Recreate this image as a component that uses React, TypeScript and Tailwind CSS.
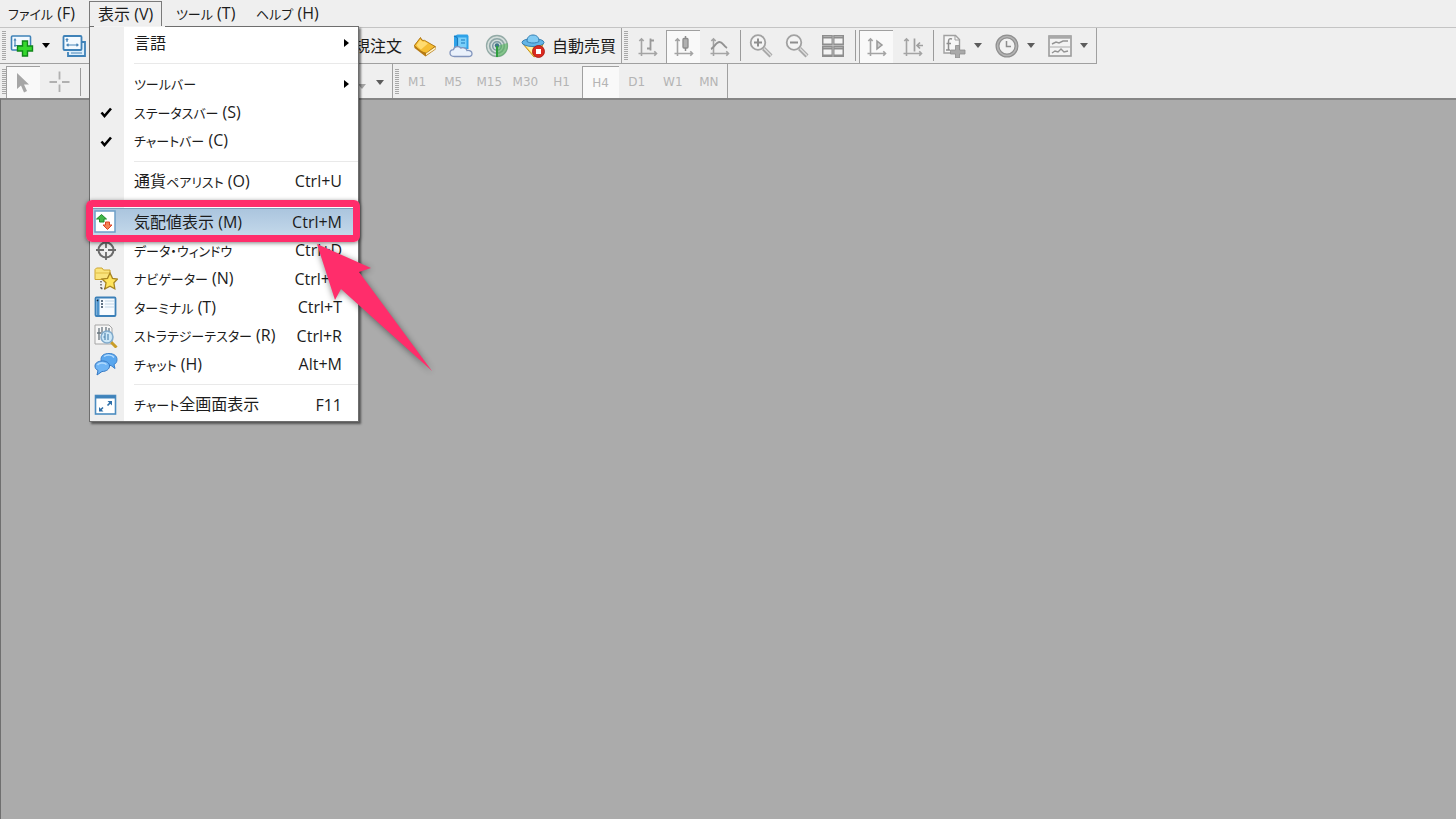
/**
 * Trading terminal window
 *
 * Menu bar with the "view" menu open, two toolbar rows and an empty workspace.
 * The market watch entry is highlighted with a callout frame and an arrow.
 */

import type { ReactNode } from "react";

const KANA = /([\u30a0-\u30ff]+)/;

// Katakana is set a little smaller than kanji and latin, as in the UI font
function Label({ text }: { text: string }) {
  return (
    <span className="whitespace-nowrap">
      {text.split(KANA).map((part, i) =>
        KANA.test(part) ? (
          <span key={i} className="text-[13px] [font-feature-settings:'palt']">
            {part}
          </span>
        ) : (
          part
        )
      )}
    </span>
  );
}

function Svg({ children }: { children: ReactNode }) {
  return (
    <svg viewBox="0 0 24 24" className="size-6 shrink-0" fill="none" aria-hidden="true">
      {children}
    </svg>
  );
}

/* ---------- Toolbar icons ---------- */

const NewChartIcon = () => (
  <Svg>
    <rect x="1.5" y="2" width="19" height="14" rx="1" fill="#f2f9ff" stroke="#3f82b8" strokeWidth="1.6" />
    <path d="M5 5v8M4 6.5l1-1.5 1 1.5M4 11.5h8" stroke="#4a86b8" strokeWidth="1.2" />
    <path d="M12.5 7h5v5h5v5h-5v5h-5v-5h-5v-5h5z" fill="#35d82c" stroke="#11861a" strokeWidth="1.4" />
  </Svg>
);

const ProfilesIcon = () => (
  <Svg>
    <path d="M19 8h4v14H6v-4" fill="#dceefb" stroke="#3f82b8" strokeWidth="1.8" />
    <rect x="1.5" y="2" width="18" height="14" rx="1" fill="#f4faff" stroke="#3f82b8" strokeWidth="1.8" />
    <path d="M5 5v3M3.8 6 5 4.800l1.200 1.200M5 11h11M6.500 9.800 5 11l1.500 1.200M14.500 9.800 16 11l-1.500 1.200M9 19h11" stroke="#4a86b8" strokeWidth="1.2" />
  </Svg>
);

const BookIcon = () => (
  <Svg>
    <path d="M1 11.500 7.500 3.500 9.500 6 23 12.500 22.500 15.500 12.500 22.500 1.500 14z" fill="#b87b14" />
    <path d="M1.500 11.500 7.500 3.500c.5 2.500 2 3.300 4 2.800l10.500 6.200-8.500 6.500c-3 .5-9-4-12-7.500z" fill="#f5bd33" stroke="#a8700f" strokeWidth=".8" />
    <path d="M3.500 11 7.500 5.500c1 2 2.500 2.500 4 2l3.500 2-7 6c-1.500-1-3.500-3-4.500-4.500z" fill="#ffdb70" />
    <path d="m13 19.500 9.300-6.500v2L13 21.300z" fill="#fff3c8" />
  </Svg>
);

const CloudServerIcon = () => (
  <Svg>
    <path d="M5 2 8.500 0.500h10l1 1.500v13H5z" fill="#2fa2e8" />
    <path d="M8.500 3.500h9v10h-9z" fill="#7bd0fa" />
    <path d="M8.500 3.500 5 2M12 6h4M12 9h4M8.500 4v9" stroke="#1779bd" strokeWidth="1.2" />
    <path
      d="M5.500 22.500C2.500 22.500 1 21 1 19s1.500-3.300 3.500-3.300C5 13.500 6.500 12.500 8.500 12.500c1.500 0 2.500.5 3.300 1.500 3-.8 5.700.2 6.200 2.500 3-.3 5 1 5 3.200 0 1.800-1.500 2.800-3.500 2.800z"
      fill="#eaf1fb"
      stroke="#8295bd"
      strokeWidth="1.3"
    />
  </Svg>
);

const SignalIcon = () => (
  <Svg>
    <circle cx="12" cy="12" r="10.5" fill="#d4dedb" stroke="#93aaa6" strokeWidth="1.3" />
    <circle cx="12" cy="12" r="7.3" stroke="#8ea6a6" strokeWidth="1.6" />
    <circle cx="12" cy="12" r="4.3" stroke="#7b9aa2" strokeWidth="1.5" />
    <path d="M12 12v11A11 11 0 0 0 22.500 9z" fill="#54b45a" opacity=".6" />
    <circle cx="12" cy="11.5" r="2.2" fill="#3f7687" />
    <path d="M12 12v11" stroke="#2f9e3e" strokeWidth="2" />
  </Svg>
);

const AutoTradeIcon = () => (
  <Svg>
    <path d="M2 10h20l-3 9-6 4z" fill="#f7cd49" stroke="#c79520" />
    <path d="M4 11h8l-1 8z" fill="#fff0a8" />
    <ellipse cx="12" cy="8.500" rx="11" ry="4" fill="#63b5e6" stroke="#347fb3" />
    <path d="M6 7.500C6 3 8.500 1 12 1s6 2 6 6.500c-3 2-9 2-12 0z" fill="#82cbf3" stroke="#347fb3" />
    <circle cx="17.500" cy="17.500" r="6" fill="#d92a20" stroke="#a7160f" strokeWidth=".8" />
    <rect x="15" y="15" width="5" height="5" fill="#fff" />
  </Svg>
);

// The chart icons share the same pair of axes
const Axes = () => (
  <path
    d="M5.500 3.500V21M3.300 6l2.200-2.200L7.700 6M2.500 18.500h18M18.300 16.300l2.200 2.200-2.200 2.200"
    stroke="#a4a4a4"
    strokeWidth="1.6"
  />
);

const BarChartIcon = () => (
  <Svg>
    <Axes />
    <path d="M14.500 3.500v12M14.500 5.500H18M11 13.500h3.500" stroke="#999999" strokeWidth="1.800" />
  </Svg>
);

const CandleIcon = () => (
  <Svg>
    <Axes />
    <path d="M13.500 1v15" stroke="#8c8c8c" strokeWidth="1.500" />
    <rect x="11" y="3.500" width="5" height="9.500" rx="1" fill="#b0b0b0" stroke="#8c8c8c" strokeWidth="1.300" />
  </Svg>
);

const LineChartIcon = () => (
  <Svg>
    <Axes />
    <path d="M3 14c3-1 5-7 8.500-7 3 0 4 4 7.500 6" stroke="#929292" strokeWidth="1.900" />
  </Svg>
);

const ZoomIcon = ({ plus = false }: { plus?: boolean }) => (
  <Svg>
    <path d="m14.500 14.500 7.500 7.500" stroke="#a6a6a6" strokeWidth="4.200" />
    <path d="m15 14.500 7 7" stroke="#dcdcdc" strokeWidth="1.600" />
    <circle cx="9" cy="8.500" r="7.300" fill="#f4f4f4" stroke="#a2a2a2" strokeWidth="1.800" />
    <path d={plus ? "M9 4.500v8M5 8.500h8" : "M5 8.500h8"} stroke="#8e8e8e" strokeWidth="2" />
  </Svg>
);

const TileIcon = () => (
  <Svg>
    <path d="M1 1h22v22H1z" fill="#8e8e8e" />
    <path d="M2.500 4.500h8v5h-8zM13.500 4.500h8v5h-8zM2.500 15.500h8v5h-8zM13.500 15.500h8v5h-8z" fill="#f4f4f4" />
    <path d="M2.500 2.500h8M13.500 2.500h8M2.500 13.500h8M13.500 13.500h8" stroke="#b0b0b0" strokeWidth="1.200" />
    <path d="M1 11.500h22M12 1v22" stroke="#c8c8c8" strokeWidth=".7" />
  </Svg>
);

const AutoScrollIcon = () => (
  <Svg>
    <Axes />
    <path d="m12 6 5 4-5 4z" fill="#cfcfcf" stroke="#999999" strokeWidth="1.500" />
  </Svg>
);

const ChartShiftIcon = () => (
  <Svg>
    <Axes />
    <path d="M13.500 3.500v13M22 10.500h-5.500M19 7.500l-3 3 3 3" stroke="#a0a0a0" strokeWidth="1.700" />
  </Svg>
);

const IndicatorIcon = () => (
  <Svg>
    <path d="M2 1.500h11.500l4 4V19H2z" fill="#f6f6f6" stroke="#a0a0a0" strokeWidth="1.400" />
    <path d="M13 2v4h4" stroke="#a0a0a0" />
    <path d="M10 5c-2.500-.8-3.500 0-3.500 2.500V16M4.500 9.500H9M4 16h4" stroke="#8e8e8e" strokeWidth="1.500" />
    <path d="M13.500 11.500h4V16H23v4h-5.500v4h-4v-4H8.500v-4h5z" fill="#a9a9a9" stroke="#8d8d8d" strokeWidth=".8" />
  </Svg>
);

const ClockIcon = () => (
  <Svg>
    <circle cx="12" cy="12" r="9.500" fill="#f2f2f2" stroke="#8f8f8f" strokeWidth="4" />
    <circle cx="12" cy="12" r="9.500" stroke="#b4b4b4" strokeWidth="1.600" />
    <path d="M11.500 7v5.500H16" stroke="#8d8d8d" strokeWidth="1.500" />
  </Svg>
);

const TemplateIcon = () => (
  <Svg>
    <rect x="1" y="2" width="22" height="20" fill="#f3f3f3" stroke="#9c9c9c" strokeWidth="1.600" />
    <path d="M1 3.500h22" stroke="#a8a8a8" strokeWidth="2.500" />
    <path d="M2 13h20" stroke="#ababab" />
    <path d="m4 10 4-2 3 1 4-2h5M4 19l3-2 3 1 3-3 3 3 4-1" stroke="#949494" strokeWidth="1.400" />
  </Svg>
);

const CursorIcon = () => (
  <Svg>
    <path d="M5 2v16l4-3.500 3 7 3-1.500-3-6.500h5z" fill="#a6a6a6" />
  </Svg>
);

const CrosshairIcon = () => (
  <Svg>
    <path d="M11.500 1.500v8M11.500 14.500v7.500M1.500 12h7.500M14 12h7.500" stroke="#b0b0b0" strokeWidth="1.800" />
  </Svg>
);

/* ---------- Menu icons ---------- */

const CheckIcon = () => (
  <Svg>
    <path d="m7.500 12.500 3 3.500 6.500-7.500" stroke="#000" strokeWidth="2.600" />
  </Svg>
);

const MarketWatchIcon = () => (
  <Svg>
    <rect x="1" y="1" width="20" height="21" fill="#fff" stroke="#6d9fc7" strokeWidth="1.500" />
    <path d="m7.500 4.500 5 4.500H10v3H5.500V9H2.500z" fill="#42b649" stroke="#208b2a" />
    <path d="m13.500 19.500-4.500-4.500h2.500v-3h4v3H18z" fill="#f58355" stroke="#dc4526" />
  </Svg>
);

const DataWindowIcon = () => (
  <Svg>
    <circle cx="12" cy="12" r="7.500" stroke="#6b6b6b" strokeWidth="2" />
    <path d="M12 2v8M12 14v8M2 12h8M14 12h8" stroke="#6b6b6b" strokeWidth="1.800" />
  </Svg>
);

const NavigatorIcon = () => (
  <Svg>
    <path d="M1 12.500V2.500L2.500 1H8l1.500 2H16v9.500z" fill="#fae47c" stroke="#cda530" />
    <path d="M1.500 6H15" stroke="#e0bd45" />
    <path d="M7 14v8M7 21.500h5" stroke="#555" strokeWidth="1.400" strokeDasharray="1.500 1.500" />
    <path d="m16 6 2.500 5.300 5 .7-3.600 3.800.9 6-4.800-2.600-5 2.600 1-6L8 12l5.500-.7z" fill="#ffe45b" stroke="#a88522" strokeWidth="1.300" />
  </Svg>
);

const TerminalIcon = () => (
  <Svg>
    <rect x="1.500" y="2.500" width="20" height="18.500" rx="1" fill="#f7fbff" stroke="#3c80b8" strokeWidth="1.800" />
    <path d="M2.500 3.500H5.500v16.500H2.500z" fill="#4e94cc" />
    <path d="M7 6h2M7 9h2M7 12h2" stroke="#30475e" strokeWidth="1.300" />
    <path d="M11 6h9M11 9h9M11 12h9" stroke="#c2d6e6" />
    <path d="m3 5 1 1" stroke="#123" strokeWidth="1.500" />
  </Svg>
);

const TesterIcon = () => (
  <Svg>
    <path d="M1 1h14l3 3v16H1z" fill="#f6f6f6" stroke="#a5a5a5" />
    <path d="M5 4v12M8 3v8M12 3v6M15 4v5M3 9h4" stroke="#67747d" strokeWidth="1.300" />
    <path d="m17 18 5.500 5.500" stroke="#c99d28" strokeWidth="3" />
    <circle cx="13" cy="13" r="6" fill="#c6e5f8" fillOpacity=".85" stroke="#80aacb" strokeWidth="1.500" />
    <path d="M11 9v7M14 10v6M9.500 13H11" stroke="#5d91b8" strokeWidth="1.300" />
  </Svg>
);

const ChatIcon = () => (
  <Svg>
    <path d="M15 1.500c5 0 8 2.500 8 6 0 2.500-1 4-3 5l1 4-4-3c-6 .5-10-2-10-6s3-6 8-6z" fill="#5aa7ee" stroke="#3d82cb" />
    <path d="M8.500 9c4 0 7 2 7 5s-3 5.500-7.500 5.500L3 23l1-4.500c-2-1-3-2.500-3-4.500 0-3 3-5 7.500-5z" fill="#6fb5f5" stroke="#3477c2" />
    <path d="M10 4.500c3-2 8-2 10 1M3.500 13c1.500-2 6-3 9-.5" stroke="#b3dcff" strokeWidth="1.500" />
  </Svg>
);

const FullscreenIcon = () => (
  <Svg>
    <rect x="1.500" y="2.500" width="20" height="18.500" fill="#fff" stroke="#4c8cc0" strokeWidth="1.600" />
    <path d="M1.500 4h20" stroke="#3f83bb" strokeWidth="3" />
    <path d="M13.500 8H18v4.500zM5 14v4.500h4.500z" fill="#2f6fa8" />
    <path d="m13.500 12.500 3-3M6 17.500l3-3" stroke="#2f6fa8" strokeWidth="1.600" />
  </Svg>
);

/* ---------- Small toolbar parts ---------- */

const Grip = () => (
  <span className="my-[3px] ml-0.5 w-1 shrink-0 bg-[repeating-linear-gradient(to_bottom,#a8a8a8_0_1px,#efefef_1px_2px)]" />
);

const Divider = () => <span className="my-0.5 w-px shrink-0 bg-[#9b9b9b]" />;

function Caret({ dark = false }: { dark?: boolean }) {
  return (
    <svg viewBox="0 0 8 5" className="h-[5px] w-2 shrink-0" aria-hidden="true">
      <path d="M0 0h8L4 5z" fill={dark ? "#000" : "#5c5c5c"} />
    </svg>
  );
}

function ToolButton({ label, pressed = false, children }: { label: string; pressed?: boolean; children: ReactNode }) {
  return (
    <button
      type="button"
      aria-label={label}
      aria-pressed={pressed}
      className={
        pressed
          ? "mr-0.5 flex w-[34px] shrink-0 items-center justify-center border-t border-l border-[#a0a0a0] bg-[#f9f9f9]"
          : "flex w-9 shrink-0 items-center justify-center"
      }
    >
      {children}
    </button>
  );
}

function DropButton({ label, children }: { label: string; children: ReactNode }) {
  return (
    <button type="button" aria-label={label} className="flex w-[53px] shrink-0 items-center gap-2 pl-2">
      {children}
      <Caret />
    </button>
  );
}

/* ---------- View menu ---------- */

type Entry = {
  label: string;
  keys?: string;
  icon?: ReactNode;
  submenu?: boolean;
  active?: boolean;
};

const GROUPS: Entry[][] = [
  [{ label: "言語", submenu: true }],
  [
    { label: "ツールバー", submenu: true },
    { label: "ステータスバー (S)", icon: <CheckIcon /> },
    { label: "チャートバー (C)", icon: <CheckIcon /> },
  ],
  [{ label: "通貨ペアリスト (O)", keys: "Ctrl+U" }],
  [
    { label: "気配値表示 (M)", keys: "Ctrl+M", icon: <MarketWatchIcon />, active: true },
    { label: "データ・ウィンドウ", keys: "Ctrl+D", icon: <DataWindowIcon /> },
    { label: "ナビゲーター (N)", keys: "Ctrl+N", icon: <NavigatorIcon /> },
    { label: "ターミナル (T)", keys: "Ctrl+T", icon: <TerminalIcon /> },
    { label: "ストラテジーテスター (R)", keys: "Ctrl+R", icon: <TesterIcon /> },
    { label: "チャット (H)", keys: "Alt+M", icon: <ChatIcon /> },
  ],
  [{ label: "チャート全画面表示", keys: "F11", icon: <FullscreenIcon /> }],
];

// Pink frame and arrow drawn over the highlighted entry
function Callout() {
  return (
    <>
      <span className="pointer-events-none absolute -top-2 -right-0.5 -bottom-1.5 -left-1 z-10 rounded-md border-[7px] border-[#ff2d6b] shadow-[0_1px_4px_rgba(0,0,0,0.5)]" />
      <svg
        viewBox="0 0 120 132"
        className="pointer-events-none absolute top-[34px] left-[225px] z-20 h-[132px] w-[120px] drop-shadow-[0_1px_3px_rgba(0,0,0,0.45)]"
        aria-hidden="true"
      >
        <path d="M2 2 56 26 44 30 117 129 26 47 20 58z" fill="#ff2d6b" />
      </svg>
    </>
  );
}

function MenuItem({ entry }: { entry: Entry }) {
  return (
    <li role="none" className="relative flex flex-1">
      <button
        type="button"
        role="menuitem"
        className={
          entry.active
            ? "flex w-full items-center border border-[#7d9cba] bg-linear-to-b from-[#abc5de] to-[#c3d8ea] text-left"
            : "flex w-full items-center border border-transparent text-left"
        }
      >
        <span className="flex w-[43px] shrink-0 items-center pl-[3px]">{entry.icon}</span>
        <Label text={entry.label} />
        {entry.keys && <span className="ml-auto pr-[15px]">{entry.keys}</span>}
        {entry.submenu && (
          <svg viewBox="0 0 5 8" className="mr-2 ml-auto h-2 w-[5px]" aria-hidden="true">
            <path d="M0 0v8l5-4z" fill="#000" />
          </svg>
        )}
      </button>
      {entry.active && <Callout />}
    </li>
  );
}

function ViewMenu() {
  return (
    <div className="absolute top-full -left-px z-30 w-[270px] border border-[#6e6e6e] bg-[linear-gradient(to_right,#efefef_34px,#ffffff_34px)] py-0.5 shadow-[2px_2px_2px_rgba(0,0,0,0.5)]">
      {/* opens the top border under the active menu title */}
      <span className="absolute -top-px left-1 h-px w-[71px] bg-[#f4f4f4]" />
      <ul role="menu" aria-label="表示" className="flex h-[390px] flex-col">
        {GROUPS.map((group, i) => (
          <li key={i} role="none" className="contents">
            {i > 0 && (
              <span className="flex h-3 shrink-0 items-center pl-11">
                <span className="h-px w-full bg-[#e9e9e9]" />
              </span>
            )}
            <ul role="group" className="contents">
              {group.map((entry) => (
                <MenuItem key={entry.label} entry={entry} />
              ))}
            </ul>
          </li>
        ))}
      </ul>
    </div>
  );
}

function MenuBar() {
  return (
    <nav className="flex h-[27px] items-start pt-px">
      <button type="button" className="h-[25px] w-[89px] pl-2 text-left">
        <Label text="ファイル (F)" />
      </button>
      <div className="relative h-[25px] w-[73px] border border-b-0 border-[#7a7a7a]">
        <button type="button" aria-expanded="true" className="size-full pl-2 text-left">
          <Label text="表示 (V)" />
        </button>
        <ViewMenu />
      </div>
      <button type="button" className="h-[25px] w-20 pl-3.5 text-left">
        <Label text="ツール (T)" />
      </button>
      <button type="button" className="h-[25px] w-20 pl-3.5 text-left">
        <Label text="ヘルプ (H)" />
      </button>
    </nav>
  );
}

/* ---------- Toolbars ---------- */

const PERIODS = ["M1", "M5", "M15", "M30", "H1", "H4", "D1", "W1", "MN"];

function MainToolbar() {
  return (
    <div className="flex h-[37px] border-t border-[#c4c4c4]">
      <div className="flex w-[1097px] border-r border-b border-[#a0a0a0]">
        <div className="flex w-[622px] border-r border-[#a0a0a0]">
          <Grip />
          <button type="button" aria-label="新規チャート" className="flex w-[52px] items-center gap-2 pl-1">
            <NewChartIcon />
            <Caret dark />
          </button>
          <button type="button" aria-label="プロファイル" className="flex items-center pl-1">
            <ProfilesIcon />
          </button>
          <button type="button" className="ml-auto pr-[5px]">
            新規注文
          </button>
          <ToolButton label="メタエディター"><BookIcon /></ToolButton>
          <ToolButton label="サーバー"><CloudServerIcon /></ToolButton>
          <ToolButton label="シグナル"><SignalIcon /></ToolButton>
          <button type="button" className="flex items-center gap-[7px] pr-[5px] pl-1.5">
            <AutoTradeIcon />
            自動売買
          </button>
        </div>
        <Grip />
        <div className="flex pt-0.5 pl-0.5">
          <ToolButton label="バーチャート"><BarChartIcon /></ToolButton>
          <ToolButton label="ローソク足" pressed><CandleIcon /></ToolButton>
          <ToolButton label="ラインチャート"><LineChartIcon /></ToolButton>
        </div>
        <span className="w-0.5" />
        <Divider />
        <span className="w-0.5" />
        <ToolButton label="拡大"><ZoomIcon plus /></ToolButton>
        <ToolButton label="縮小"><ZoomIcon /></ToolButton>
        <ToolButton label="整列"><TileIcon /></ToolButton>
        <span className="w-1" />
        <Divider />
        <div className="flex pt-0.5 pl-[3px]">
          <ToolButton label="自動スクロール" pressed><AutoScrollIcon /></ToolButton>
          <ToolButton label="チャートシフト"><ChartShiftIcon /></ToolButton>
        </div>
        <span className="w-0.5" />
        <Divider />
        <DropButton label="インディケータ"><IndicatorIcon /></DropButton>
        <DropButton label="時間足"><ClockIcon /></DropButton>
        <DropButton label="テンプレート"><TemplateIcon /></DropButton>
      </div>
    </div>
  );
}

function PeriodToolbar() {
  return (
    <div className="flex h-[34px]">
      <div className="flex w-[393px] border-r border-[#a0a0a0] pt-0.5">
        <Grip />
        <ToolButton label="カーソル" pressed><CursorIcon /></ToolButton>
        <ToolButton label="クロスヘア"><CrosshairIcon /></ToolButton>
        <span className="w-0.5" />
        <Divider />
        <button type="button" aria-label="矢印" className="ml-auto flex items-center gap-2.5 pr-2">
          <span className="mt-2 flex opacity-50">
            <Caret />
          </span>
          <Caret />
        </button>
      </div>
      <div className="flex w-[335px] border-r border-[#a0a0a0] pt-0.5">
        <Grip />
        {PERIODS.map((period) => (
          <button
            key={period}
            type="button"
            aria-pressed={period === "H4"}
            className={
              period === "H4"
                ? "ml-0.5 flex-1 border-t border-l border-[#a0a0a0] bg-[#f9f9f9] font-['DejaVu_Sans'] text-xs text-[#b4b4b4]"
                : "flex-1 font-['DejaVu_Sans'] text-xs text-[#b4b4b4]"
            }
          >
            {period}
          </button>
        ))}
      </div>
    </div>
  );
}

export default function App() {
  return (
    <div className="flex min-h-screen flex-col bg-[#efefef] font-['Open_Sans','Noto_Sans_CJK_JP',sans-serif] text-base leading-6 text-[#1c1c1c]">
      <MenuBar />
      <MainToolbar />
      <PeriodToolbar />
      <main className="flex-1 border-t-2 border-l border-t-[#858585] border-l-[#6f6f6f] bg-[#ababab]" />
    </div>
  );
}
